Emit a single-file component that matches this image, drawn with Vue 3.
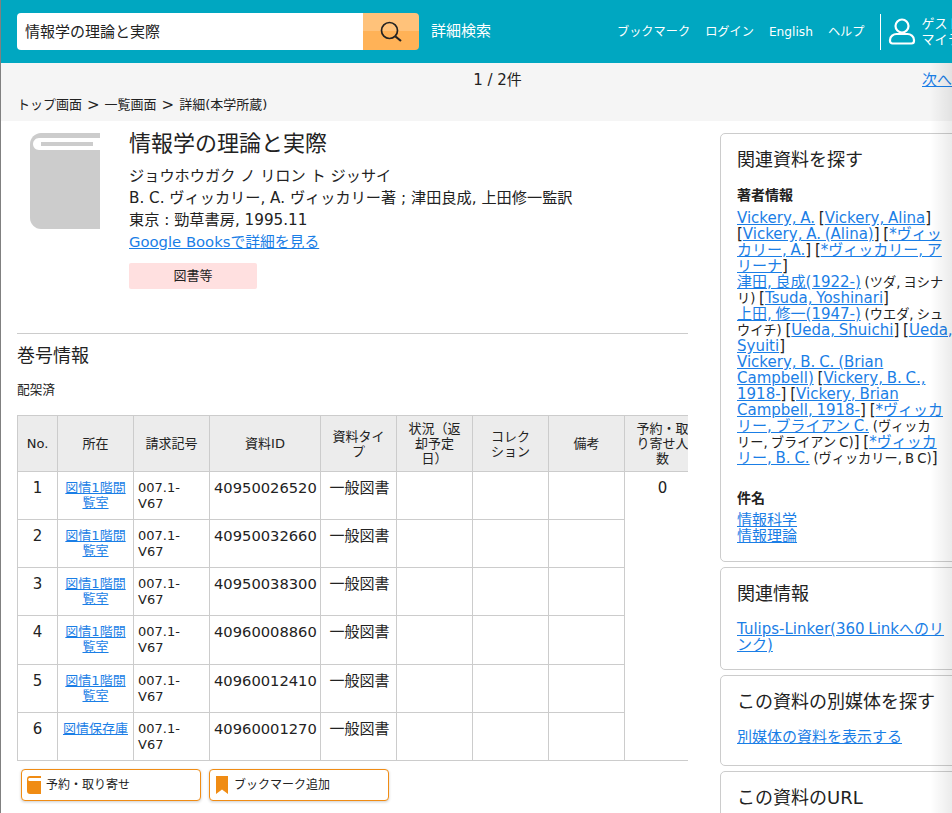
<template>
  <div class="page">
    <!-- ヘッダー -->
    <header class="header">
      <form class="search" @submit.prevent>
        <input v-model="query" class="search-input" type="text" />
        <button class="search-btn" type="button" aria-label="検索">
          <svg viewBox="0 0 24 24" width="24" height="24" fill="none" stroke="#222" stroke-width="1.7">
            <circle cx="10.5" cy="10.500" r="8"></circle>
            <path d="M16.500 16.500l5.500 4.500" stroke-width="2.2"></path>
          </svg>
        </button>
      </form>
      <a class="detail-search">詳細検索</a>
      <nav class="nav">
        <a v-for="item in navItems" :key="item">{{ item }}</a>
      </nav>
      <div class="user">
        <svg viewBox="0 0 28 28" width="28" height="28" fill="none" stroke="#fff" stroke-width="2.2">
          <circle cx="14" cy="8" r="6.500"></circle>
          <path d="M2 22c0-3.500 3.500-6 6.500-6h11c3 0 6.500 2.500 6.500 6v1c0 1.500-1 2.500-2.500 2.500h-19c-1.500 0-2.500-1-2.500-2.500z"></path>
        </svg>
        <div class="user-text">
          <div>ゲスト</div>
          <div>マイライブラリ</div>
        </div>
      </div>
    </header>

    <!-- 件数とパンくず -->
    <div class="subbar">
      <div class="pager">
        <span>1 / 2件</span>
        <a class="link pager-next">次へ</a>
      </div>
      <div class="crumbs">
        <span>トップ画面</span><i>&gt;</i><span>一覧画面</span><i>&gt;</i><span>詳細(本学所蔵)</span>
      </div>
    </div>

    <div class="content">
      <main class="main">
        <section class="book">
          <svg class="cover" viewBox="0 0 70 96" width="70" height="96">
            <path d="M70 0H11C5 0 0 5 0 11v74c0 6 5 11 11 11h59z" fill="#ccc"></path>
            <path d="M70 5H9C5.500 5 3 8 3 11s2.500 6 6 6h61z" fill="#fff"></path>
            <rect x="11" y="9" width="52" height="4" fill="#ccc"></rect>
          </svg>
          <div class="book-info">
            <h1 class="book-title">情報学の理論と実際</h1>
            <div>ジョウホウガク ノ リロン ト ジッサイ</div>
            <div>B. C. ヴィッカリー, A. ヴィッカリー著 ; 津田良成, 上田修一監訳</div>
            <div>東京 : 勁草書房, 1995.11</div>
            <a class="link google">Google Booksで詳細を見る</a>
            <div class="tag">図書等</div>
          </div>
        </section>

        <section class="volumes">
          <h2 class="section-title">巻号情報</h2>
          <p class="shelved">配架済</p>
          <div class="table-wrap">
            <table class="holdings">
              <colgroup>
                <col v-for="w in colWidths" :key="w.id" :style="{ width: w.px + 'px' }" />
              </colgroup>
              <thead>
                <tr>
                  <th v-for="h in headers" :key="h">{{ h }}</th>
                </tr>
              </thead>
              <tbody>
                <tr v-for="(row, i) in rows" :key="row.id">
                  <td class="center">{{ i + 1 }}</td>
                  <td class="center small"><a class="link">{{ row.place }}</a></td>
                  <td class="small call-no">007.1-V67</td>
                  <td class="item-id">{{ row.id }}</td>
                  <td class="center type">一般図書</td>
                  <td></td>
                  <td></td>
                  <td></td>
                  <td v-if="i === 0" class="center" :rowspan="rows.length">0</td>
                </tr>
              </tbody>
            </table>
          </div>
          <div class="actions">
            <button class="action" type="button">
              <svg viewBox="0 0 14 18" width="14" height="18">
                <path d="M14 0H3C1.300 0 0 1.300 0 3v12c0 1.700 1.300 3 3 3h11z" fill="#f08c14"></path>
                <path d="M14 2H3C2 2 1.200 2.500 1.200 3.500S2 5 3 5h11z" fill="#fff"></path>
              </svg>
              予約・取り寄せ
            </button>
            <button class="action" type="button">
              <svg viewBox="0 0 14 18" width="14" height="18">
                <path d="M1 0h12v18l-6-4.500L1 18z" fill="#f08c14"></path>
              </svg>
              ブックマーク追加
            </button>
          </div>
        </section>
      </main>

      <!-- サイドバー -->
      <aside class="side">
        <section class="card">
          <h3 class="card-title">関連資料を探す</h3>
          <h4 class="card-sub">著者情報</h4>
          <div class="authors">
            <div><a class="link">Vickery, A.</a> [<a class="link">Vickery, Alina</a>] [<a class="link">Vickery, A. (Alina)</a>] [<a class="link">*ヴィッカリー, A.</a>] [<a class="link">*ヴィッカリー, アリーナ</a>]</div>
            <div><a class="link">津田, 良成(1922-)</a> <small>(ツダ, ヨシナリ)</small> [<a class="link">Tsuda, Yoshinari</a>]</div>
            <div><a class="link">上田, 修一(1947-)</a> <small>(ウエダ, シュウイチ)</small> [<a class="link">Ueda, Shuichi</a>] [<a class="link">Ueda, Syuiti</a>]</div>
            <div><a class="link">Vickery, B. C. (Brian Campbell)</a> [<a class="link">Vickery, B. C., 1918-</a>] [<a class="link">Vickery, Brian Campbell, 1918-</a>] [<a class="link">*ヴィッカ<span class="nb">リー</span>, ブライアン C.</a> <small>(ヴィッカ<span class="nb">リー</span>, ブライアン C)</small>] [<a class="link">*ヴィッカ<span class="nb">リー</span>, B. C.</a> <small>(ヴィッカリー, B C)</small>]</div>
          </div>
          <h4 class="card-sub subject">件名</h4>
          <div class="authors">
            <div><a class="link">情報科学</a></div>
            <div><a class="link">情報理論</a></div>
          </div>
        </section>
        <section class="card">
          <h3 class="card-title">関連情報</h3>
          <div class="authors card-body linker"><a class="link">Tulips-Linker(360 Linkへのリンク)</a></div>
        </section>
        <section class="card">
          <h3 class="card-title">この資料の別媒体を探す</h3>
          <div class="card-body media"><a class="link">別媒体の資料を表示する</a></div>
        </section>
        <section class="card">
          <h3 class="card-title">この資料のURL</h3>
        </section>
      </aside>
    </div>
    <div class="edge-shade"></div>
  </div>
</template>

<script setup>
import { ref } from 'vue';

const query = ref('情報学の理論と実際');

const navItems = ['ブックマーク', 'ログイン', 'English', 'ヘルプ'];

const headers = ['No.', '所在', '請求記号', '資料ID', '資料タイ\nプ', '状況（返\n却予定\n日）', 'コレク\nション', '備考', '予約・取\nり寄せ人\n数'];

const colWidths = [40, 76, 76, 111, 76, 76, 76, 76, 76].map((px, id) => ({ id, px }));

const rows = [
  { id: '40950026520', place: '図情1階閲覧室' },
  { id: '40950032660', place: '図情1階閲覧室' },
  { id: '40950038300', place: '図情1階閲覧室' },
  { id: '40960008860', place: '図情1階閲覧室' },
  { id: '40960012410', place: '図情1階閲覧室' },
  { id: '40960001270', place: '図情保存庫' }
];
</script>

<style>
html, body {
  margin: 0;
  background: #fff;
  overflow: hidden;
}
</style>

<style scoped>
.page {
  position: relative;
  width: 952px;
  height: 813px;
  overflow: hidden;
  box-sizing: border-box;
  border-left: 1px solid #808080;
  font-family: "DejaVu Sans", "Noto Sans CJK JP", sans-serif;
  font-size: 15px;
  line-height: 22px;
  color: #222;
}

.header {
  display: flex;
  align-items: center;
  height: 63px;
  margin-left: -1px;
  padding-left: 17px;
  background: #00a7c1;
  color: #fff;
}

.search {
  display: flex;
  flex: none;
  width: 402px;
  height: 37px;
}

.search-input {
  flex: 1;
  min-width: 0;
  padding: 0 8px;
  border: none;
  border-radius: 4px 0 0 4px;
  outline: none;
  font: inherit;
  color: #222;
}

.search-btn {
  display: flex;
  align-items: center;
  justify-content: center;
  width: 56px;
  padding: 0;
  border: none;
  border-radius: 0 4px 4px 0;
  background: linear-gradient(#ffc27a 50%, #ffb257 50%);
}

.detail-search {
  flex: none;
  width: 186px;
  margin: -2px 0 0 12px;
}

.nav {
  display: flex;
  flex: none;
  gap: 15px;
  font-size: 12.2px;
}

.user {
  display: flex;
  flex: none;
  align-items: center;
  gap: 5px;
  height: 36px;
  margin-left: 16px;
  padding-left: 7px;
  border-left: 1px solid #fff;
  font-size: 13px;
  line-height: 16px;
  white-space: nowrap;
}

.subbar {
  height: 58px;
  background: #f5f5f5;
}

.pager {
  position: relative;
  height: 31px;
  padding: 6px 0 0 42px;
  box-sizing: border-box;
  text-align: center;
}

.pager-next {
  position: absolute;
  left: 921px;
  top: 6px;
  white-space: nowrap;
}

.crumbs {
  display: flex;
  gap: 5px;
  padding-left: 16px;
  font-size: 13px;
}

.crumbs i {
  font-style: normal;
  font-size: 15px;
}

.link {
  color: #1a7ee6;
  text-decoration: underline;
}

.content {
  display: flex;
  align-items: flex-start;
  padding: 12px 0 0 16px;
}

.main {
  flex: none;
  width: 671px;
}

.book {
  display: flex;
  height: 200px;
  padding-left: 13px;
}

.cover {
  flex: none;
  margin-right: 29px;
}

.book-info {
  font-size: 15.2px;
}

.book-title {
  margin: 0 0 10px;
  font-size: 22px;
  font-weight: 400;
  line-height: 22px;
}

.google {
  font-size: 14.8px;
}

.tag {
  width: 128px;
  height: 26px;
  margin-top: 10px;
  border-radius: 2px;
  background: #ffe0e0;
  text-align: center;
  font-size: 13px;
  line-height: 26px;
}

.volumes {
  border-top: 1px solid #ccc;
}

.section-title {
  margin: 11px 0 0;
  font-size: 18px;
  font-weight: 400;
  line-height: 22px;
}

.shelved {
  margin: 12px 0 14px;
  font-size: 12.7px;
  line-height: 22px;
}

.table-wrap {
  overflow: hidden;
}

.holdings {
  table-layout: fixed;
  width: 683px;
  border-collapse: collapse;
}

.holdings th,
.holdings td {
  border: 1px solid #ccc;
  padding: 0;
}

.holdings th {
  height: 55px;
  padding: 0;
  background: #ececec;
  font-size: 13px;
  font-weight: 400;
  line-height: 15px;
  white-space: pre-line;
}

.holdings td {
  height: 48.17px;
  padding: 5px 4px;
  vertical-align: top;
  box-sizing: border-box;
}

.holdings td.center {
  text-align: center;
}

.holdings td.small {
  font-size: 13px;
  line-height: 15px;
  padding-top: 8px;
}

.holdings td.call-no {
  padding-right: 20px;
  line-height: 16px;
}

.holdings td.item-id {
  font-size: 14.7px;
}

.holdings td.type {
  padding-left: 5px;
  padding-right: 3px;
}

.actions {
  display: flex;
  gap: 8px;
  margin: 8px 0 0 4px;
}

.action {
  display: flex;
  align-items: center;
  gap: 5px;
  width: 180px;
  height: 32px;
  padding: 0 5px;
  border: 1px solid #f08c14;
  border-radius: 4px;
  background: #fff;
  box-shadow: 0 1px 3px rgba(0, 0, 0, 0.2);
  font: inherit;
  font-size: 12px;
  color: #222;
}

.side {
  flex: none;
  width: 240px;
  margin-left: 32px;
}

.card {
  width: 240px;
  margin-bottom: 5px;
  padding: 15px 3px 17px 16px;
  border: 1px solid #ccc;
  border-radius: 5px;
  box-sizing: border-box;
}

.card-title {
  margin: 0;
  font-size: 18px;
  font-weight: 400;
  line-height: 22px;
}

.card-sub {
  margin: 13px 0 4px;
  font-size: 14px;
  font-weight: 700;
  line-height: 22px;
}

.card-sub.subject {
  margin: 21px 0 3px;
}

.authors {
  line-height: 16px;
  word-spacing: -1px;
}

.authors small {
  font-size: 13.2px;
  line-height: 1;
}

.nb {
  white-space: nowrap;
}

.card-body {
  margin-top: 16px;
}

.card-body.linker {
  margin-bottom: -1px;
}

.card-body.media {
  margin: 13px 0 0;
}

.edge-shade {
  position: absolute;
  top: 63px;
  right: 0;
  bottom: 0;
  width: 22px;
  background: linear-gradient(to right, rgba(0, 0, 0, 0), rgba(0, 0, 0, 0.08));
  pointer-events: none;
}
</style>
